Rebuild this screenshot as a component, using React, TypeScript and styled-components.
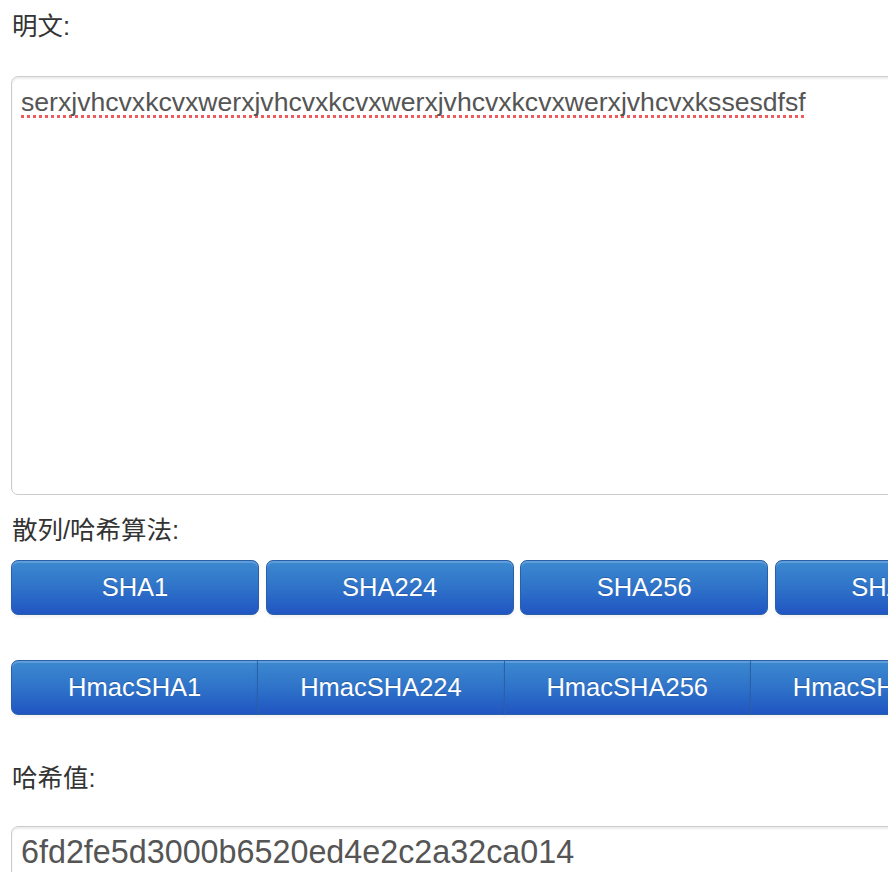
import React from "react";
import styled, { createGlobalStyle } from "styled-components";

const Global = createGlobalStyle`
  html, body { margin: 0; padding: 0; overflow: hidden; background: #fff; }
  body { font-family: "Liberation Sans", "Noto Sans CJK SC", sans-serif; color: #333; }
`;

const Page = styled.div`
  display: flex;
  flex-direction: column;
  align-items: flex-start;
  padding: 8px 0 0 11px;
  width: 1400px;
`;

const Label = styled.div<{ $gapBelow: number }>`
  font-size: 25.5px;
  line-height: 37px;
  color: #333;
  padding-left: 1px;
  margin-bottom: ${(p) => p.$gapBelow}px;
`;

const TextArea = styled.div`
  box-sizing: border-box;
  width: 1200px;
  height: 419px;
  border: 1px solid #cccccc;
  border-radius: 7px;
  box-shadow: inset 0 2px 2px rgba(0, 0, 0, 0.08);
  padding: 7px 9px;
  font-size: 26.6px;
  line-height: 37px;
  color: #555;
  margin-bottom: 17px;
`;

const Spelled = styled.span`
  text-decoration: underline dotted #f05a5a;
  text-decoration-thickness: 2.5px;
  text-underline-offset: 4px;
  text-decoration-skip-ink: none;
`;

const ButtonRow = styled.div<{ $joined?: boolean }>`
  display: flex;
  flex-wrap: nowrap;
  gap: ${(p) => (p.$joined ? 0 : 7.6)}px;
  margin-top: ${(p) => (p.$joined ? 0 : 10.5)}px;
  margin-bottom: 45px;
`;

const HashButton = styled.button<{ $w: number; $joined?: boolean }>`
  flex: 0 0 auto;
  box-sizing: border-box;
  width: ${(p) => p.$w}px;
  height: 55px;
  margin: 0;
  padding: 0;
  font-family: "Liberation Sans", sans-serif;
  font-size: 25.5px;
  color: #fff;
  text-shadow: 0 -1px 0 rgba(0, 0, 0, 0.2);
  background: linear-gradient(to bottom, #3c89d0 0%, #2f73c9 50%, #2055c2 100%);
  border: 1px solid #2a5faa;
  border-radius: ${(p) => (p.$joined ? 0 : 7)}px;
  box-shadow: inset 0 2px 0 rgba(255, 255, 255, 0.18), 0 2px 3px rgba(0, 0, 0, 0.06);
  cursor: pointer;
  &:first-child {
    border-top-left-radius: 7px;
    border-bottom-left-radius: 7px;
  }
  & + & {
    margin-left: ${(p) => (p.$joined ? -1 : 0)}px;
  }
`;

const HashInput = styled.div`
  box-sizing: border-box;
  width: 1200px;
  height: 60px;
  border: 1px solid #cccccc;
  border-radius: 7px;
  box-shadow: inset 0 2px 2px rgba(0, 0, 0, 0.08);
  padding: 7px 9px;
  font-size: 32.3px;
  line-height: 37px;
  color: #555;
`;

const plain = ["SHA1", "SHA224", "SHA256", "SHA384", "SHA512"];
const hmac = ["HmacSHA1", "HmacSHA224", "HmacSHA256", "HmacSHA384", "HmacSHA512"];

export default function App() {
  return (
    <>
      <Global />
      <Page>
        <Label $gapBelow={31}>明文:</Label>
        <TextArea>
          <Spelled>serxjvhcvxkcvxwerxjvhcvxkcvxwerxjvhcvxkcvxwerxjvhcvxkssesdfsf</Spelled>
        </TextArea>
        <Label $gapBelow={0}>散列/哈希算法:</Label>
        <ButtonRow>
          {plain.map((n) => (
            <HashButton key={n} $w={248}>
              {n}
            </HashButton>
          ))}
        </ButtonRow>
        <ButtonRow $joined>
          {hmac.map((n) => (
            <HashButton key={n} $w={247.3} $joined>
              {n}
            </HashButton>
          ))}
        </ButtonRow>
        <Label $gapBelow={29.5}>哈希值:</Label>
        <HashInput>6fd2fe5d3000b6520ed4e2c2a32ca014</HashInput>
      </Page>
    </>
  );
}
